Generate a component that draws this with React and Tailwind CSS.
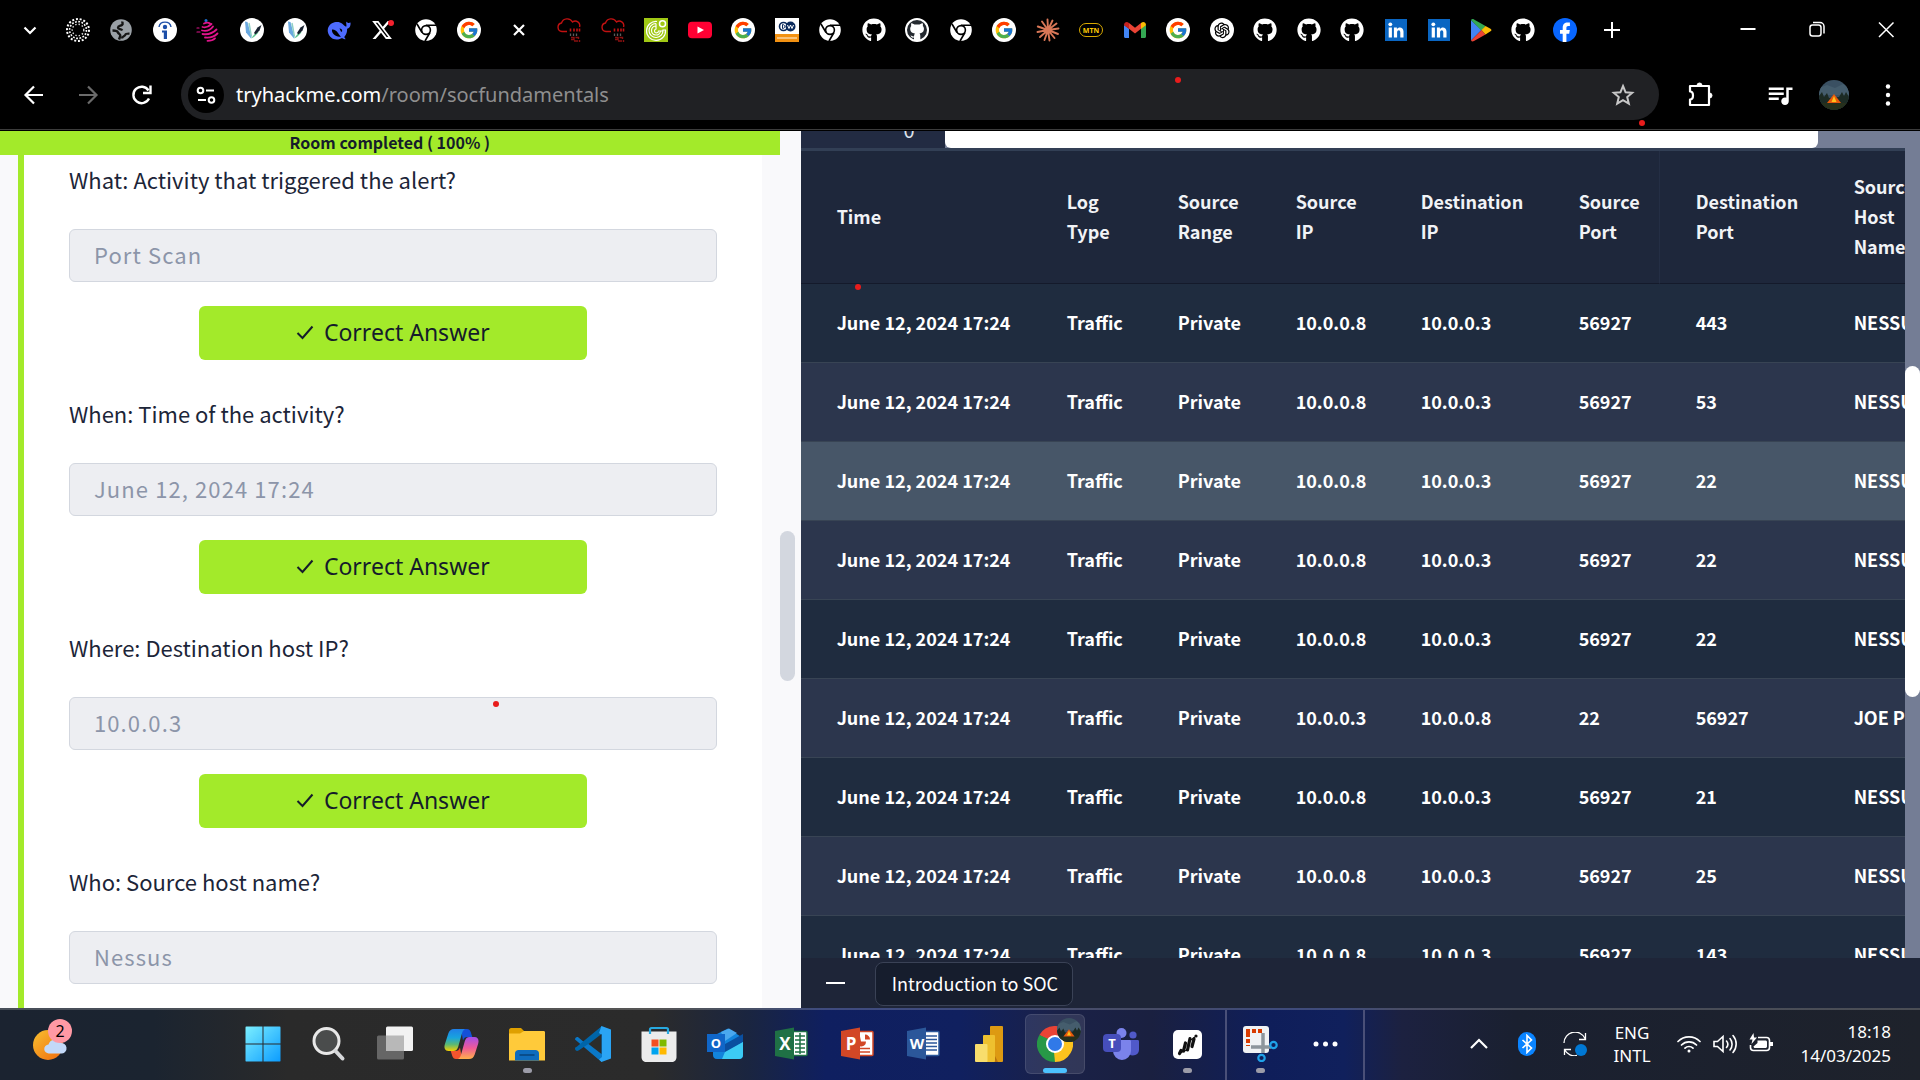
import React from "react";
import { FcGoogle } from "react-icons/fc";
import { FaGithub, FaXTwitter } from "react-icons/fa6";
import { AiOutlineOpenAI } from "react-icons/ai";
import { MdQueueMusic } from "react-icons/md";

const UI = "font-['Noto_Sans',sans-serif]";
const BODY = "font-['Noto_Sans_CJK_SC',sans-serif]";

/* ---------- tab favicons ---------- */

function Svg({ box = 24, className = "size-6", children, ...rest }) {
  return (
    <svg viewBox={`0 0 ${box} ${box}`} className={className} fill="none" aria-hidden="true" {...rest}>
      {children}
    </svg>
  );
}

const DottedRing = () => (
  <Svg>
    <circle cx="12" cy="12" r="11" stroke="#fff" strokeWidth="2" strokeDasharray="2 1.8" />
    <circle cx="12" cy="12" r="8.4" stroke="#fff" strokeWidth="1.6" strokeDasharray="1.8 1.5" />
    <circle cx="12" cy="12" r="5.8" stroke="#ddd" strokeWidth="1.4" strokeDasharray="1.4 2" />
  </Svg>
);

const Globe = () => (
  <Svg>
    <circle cx="12" cy="12" r="10.8" fill="#9aa0a6" />
    <path d="M13.500 3.500c-.5 2 1 2.500-.5 3.500s-4 .8-4 2.800c0 1.700 3.500 1 4.200 2.700M3.500 12.500c3 0 5 .3 5.500 2 .5 1.500 2.500 1 2.300 3.500l-1.300 3.500M13 20.500c0-2.500 3-2 3.500-4 .3-1 2-1 4-.9" stroke="#151515" strokeWidth="2.400" />
  </Svg>
);

const InfoMark = () => (
  <Svg>
    <circle cx="12" cy="12" r="12" fill="#fff" />
    <circle cx="12" cy="9" r="2.200" fill="#1d4fa8" />
    <path d="M9 12.500H14V21H10.800V14.500H9z" fill="#1d4fa8" />
    <path d="M6 9C7 2.500 17 2.500 18 9" stroke="#1d4fa8" strokeWidth="1.400" />
  </Svg>
);

const Cupcake = () => (
  <Svg stroke="#e0148c" strokeLinecap="round">
    <circle cx="10" cy="2.500" r="1.500" fill="#1b6fd0" stroke="none" />
    <path d="M8 5.500c2-1 4-1.500 6 0M6.500 9c3 .8 6.500-.5 9-3M6 12.500c4 1 8.500-.5 11-4M6.500 16c6 1 10-.5 14-4.500M9 19.500c5 .6 9-.6 12.500-4M11.500 22.800c3 0 6-1 7.500-2.500" strokeWidth="1.800" />
    <path d="M1 10h2M1 14h3" strokeWidth="1.200" />
  </Svg>
);

const PenMark = () => (
  <Svg>
    <circle cx="12" cy="12" r="12" fill="#fff" />
    <path d="M5 3.500l2.500.5 4 15-.5 1.500-5-6z" fill="#6aa9e0" />
    <path d="M9 5l2.500 13.500" stroke="#8fd0c4" strokeWidth="1.400" />
    <path d="M11 20.500l5.500-7 2 1-4.500 4.500z" fill="#5cc48c" />
    <path d="M14 15l3.500-5.500L21.500 7l-2 5.500-4 4z" fill="#17202f" />
  </Svg>
);

const Whale = () => (
  <Svg>
    <path d="M23.500 4.500c-1 .4-2 .8-2.800.2-1.200-.9-1.600-2-1.300-1.200-.6 2.200.6 3.800-.2 5.200-1.200-.4-2.700-1.700-4.200-3.200C13 3.600 8.500 3.200 5 5.200 1.500 7.200.2 11 1 14.500c.9 4.200 4.600 7 8.500 7 2.600 0 4-.6 5.600-1.500 1 .9 2.500 1.500 3.600 1-.9-.7-1.500-1.600-1.300-2.200 2-2.200 2.900-5 2.700-8 2.400-.4 3.800-3 3.400-6.300z" fill="#4d6bfe" />
    <path d="M5 11.500c2-.4 4.500 1 6 3.500.9 1.600 2 2.800 3 3.500-2.500.6-5.500-.2-7.300-2.200C5.100 14.500 4.800 13 5 11.500z" fill="#000" />
    <path d="M12.500 10.500c1.400-.2 2.800 1 2.700 2.500-.1.900-.9 1-1.300.4-.3-.7-.7-1.700-1.400-2.900z" fill="#000" />
  </Svg>
);

const XMark = () => (
  <span className="relative flex size-6 items-center justify-center">
    <FaXTwitter className="size-[22px] text-white" />
    <span className="absolute right-0 top-0.5 size-1.5 rounded-full bg-[#f4212e]" />
  </span>
);

const ChromeMono = () => (
  <Svg>
    <circle cx="12" cy="12" r="10.800" fill="#fff" />
    <circle cx="12" cy="12" r="5.200" fill="#000" />
    <circle cx="12" cy="12" r="3.600" fill="#fff" />
    <path d="M12 7.300h10M8 14.500L3 6M16 14.500l-5 8.500" stroke="#000" strokeWidth="1.600" />
  </Svg>
);

const Google = () => (
  <span className="flex size-6 items-center justify-center rounded-full bg-white">
    <FcGoogle className="size-5" />
  </span>
);

const RedCloud = () => (
  <Svg>
    <path d="M10 13.500H5A4.300 4.300 0 0 1 4.500 5 6 6 0 0 1 15.500 4a4.500 4.500 0 0 1 7 5" stroke="#c11111" strokeWidth="1.400" />
    <path d="M13.500 10.500v3M17 10.500v3M20 10.500v3M22.500 10.500v3" stroke="#c11111" strokeWidth="1.600" />
    <path d="M13.500 15.500v2.500M16.500 15.500v2.500M19.500 15.500v2.500" stroke="#5c5c5c" strokeWidth="1.300" />
    <path d="M14 19.500h3v2h-3M18.500 19.500h3v1.500M17 23h4M22.500 22v2" stroke="#8a1010" strokeWidth="1.400" />
  </Svg>
);

const GreenDisc = () => (
  <Svg>
    <rect width="24" height="24" fill="#a0c814" />
    <g stroke="#fff">
      <circle cx="18.500" cy="5.800" r="3" strokeWidth="1.500" />
      <path d="M13 3.500A9.500 9.500 0 1 0 21.500 12H19A7 7 0 1 1 12 5.500" strokeWidth="1.200" />
      <path d="M12 5.500v2.500A4.500 4.500 0 1 0 16.500 13H19M12 8v3a2 2 0 1 0 2.500 2H16" strokeWidth="1.200" />
    </g>
  </Svg>
);

const YouTube = () => (
  <Svg>
    <rect y="3.800" width="24" height="16.500" rx="4" fill="#ff0033" />
    <path d="M9.500 8.500v7l6.500-3.500z" fill="#fff" />
  </Svg>
);

const Dw = () => (
  <span className="flex size-6 flex-col overflow-hidden bg-white">
    <svg viewBox="0 0 24 16" className="h-4 w-6" fill="none" aria-hidden="true">
      <circle cx="8.500" cy="8.500" r="4" stroke="#0b2a5c" strokeWidth="1.600" />
      <path d="M7.500 6.500v4c3 0 3-4 0-4z" stroke="#0b2a5c" />
      <circle cx="15.500" cy="8.500" r="5" fill="#0b2a5c" />
      <path d="M12.500 7l1.500 3.500L15.500 7l1.500 3.500L18.500 7" stroke="#fff" />
    </svg>
    <span className="h-2 bg-[#f29112] px-0.5 pt-[3px]">
      <span className="block h-0.5 bg-[#f8c27c]" />
    </span>
  </span>
);

const Github = () => <FaGithub className="size-6 text-white" />;

const GithubDark = () => (
  <span className="flex size-6 items-center justify-center rounded-full border-2 border-white bg-[#24292f]">
    <svg viewBox="0 0 20 20" className="size-5" aria-hidden="true">
      <path d="M4.500 3l3 1.500h5L15.500 3c.7 1.300.5 2.300.3 3 1 1 1.300 2.200 1.100 3.500-.3 2.500-2 3.700-4.400 4 .7.700.8 1.500.8 2.500v4H7v-2.500c-2 .5-3-.5-3.500-2 1.500-.2 2 1.500 3.500.8.100-1.200.3-2 .9-2.800-3-.4-4.500-1.700-4.700-4.300-.1-1.300.3-2.300 1-3.200-.2-.8-.2-1.800.3-3z" fill="#fff" />
    </svg>
  </span>
);

const Burst = () => (
  <Svg stroke="#d97757" strokeWidth="1.900" strokeLinecap="round">
    <path d="M12 12L11.500 1.500M12 12l4.500-9.500M12 12l8.500-6.500M12 12l10.500-1.500M12 12l10 4M12 12l6.500 8M12 12l1.500 10.500M12 12L8.500 22M12 12l-8 7M12 12L1.500 14M12 12L1.800 8.500M12 12L6 3.500" />
  </Svg>
);

const Mtn = () => (
  <span className="flex h-3.5 w-6 items-center justify-center rounded-full border border-[#d9a900] font-['Open_Sans',sans-serif] text-[7px] font-bold leading-none text-[#ffcb05]">
    MTN
  </span>
);

const Gmail = () => (
  <Svg>
    <path d="M1 7v11.500c0 .9.600 1.500 1.500 1.500H6V10.500z" fill="#4285f4" />
    <path d="M23 7v11.500c0 .9-.6 1.500-1.500 1.500H18V10.500z" fill="#34a853" />
    <path d="M18 5l-6 4.800L6 5v5.800l6 4.600 6-4.600z" fill="#ea4335" />
    <path d="M1 7c0-2.500 2.700-3.800 4.600-2.300L6 5v6L1 7.200z" fill="#c5221f" />
    <path d="M23 7c0-2.500-2.700-3.800-4.600-2.300L18 5v6l5-3.800z" fill="#fbbc04" />
  </Svg>
);

const OpenAi = () => (
  <span className="flex size-6 items-center justify-center rounded-full bg-white">
    <AiOutlineOpenAI className="size-5 text-black" />
  </span>
);

const LinkedIn = () => (
  <Svg>
    <rect x="1" y="1" width="22" height="22" fill="#0a66c2" />
    <circle cx="6.300" cy="6.300" r="1.900" fill="#fff" />
    <path d="M4.700 9.600h3.200v9.900H4.700zM9.900 9.600h3v1.400c1.500-2.500 6.600-2.400 6.600 2.600v5.900h-3.200v-5c0-3-3.200-2.700-3.200.1v4.900H9.900z" fill="#fff" />
  </Svg>
);

const Play = () => (
  <Svg>
    <path d="M2 2v20.500L12.500 12z" fill="#4285f4" />
    <path d="M2 2c.7-1.300 2-1.200 3-.6l11.500 6.600-4 4.500z" fill="#34a853" />
    <path d="M2 22.500c.7 1.200 2 1.100 3 .5l11.500-6.500-4-4.500z" fill="#ea4335" />
    <path d="M16.500 8l5 2.700c1.300.8 1.300 1.900 0 2.600l-5 3.200-4-4.500z" fill="#fbbc04" />
  </Svg>
);

const Facebook = () => (
  <Svg>
    <circle cx="12" cy="12" r="12" fill="#0866ff" />
    <path d="M9.700 24v-8.300H7v-3.700h2.700V9.800c0-3.800 1.900-5.400 5-5.400.9 0 1.600.1 2.200.2V8h-1.600c-1.500 0-1.900.7-1.900 2.100V12h3.400l-.6 3.700h-2.800V24z" fill="#fff" />
  </Svg>
);

const TABS_LEFT = [
  ["Dotted", DottedRing], ["Globe", Globe], ["Info", InfoMark], ["Cupcake", Cupcake], ["Pen", PenMark],
  ["Pen", PenMark], ["DeepSeek", Whale], ["X", XMark], ["Chrome", ChromeMono], ["Google", Google],
];
const TABS_MIDDLE = [
  ["TryHackMe", RedCloud], ["TryHackMe", RedCloud], ["Goethe", GreenDisc], ["YouTube", YouTube], ["Google", Google],
  ["DW", Dw], ["Chrome", ChromeMono], ["GitHub", Github], ["GitHub", GithubDark], ["Chrome", ChromeMono],
  ["Google", Google], ["Claude", Burst], ["MTN", Mtn], ["Gmail", Gmail], ["Google", Google], ["ChatGPT", OpenAi],
  ["GitHub", Github], ["GitHub", Github], ["GitHub", Github], ["LinkedIn", LinkedIn], ["LinkedIn", LinkedIn],
];
const TABS_RIGHT = [["Google Play", Play], ["GitHub", Github], ["Facebook", Facebook]];

function TabGroup({ tabs, className }) {
  return (
    <div className={`flex items-center justify-between ${className}`}>
      {tabs.map(([name, Icon], i) => (
        <button key={i} aria-label={name} className="flex size-6 items-center justify-center">
          <Icon />
        </button>
      ))}
    </div>
  );
}

function TabStrip() {
  return (
    <div className="flex h-[60px] items-center pl-[18px] text-white">
      <button aria-label="Search tabs" className="mr-6">
        <Svg stroke="currentColor" strokeWidth="2.200"><path d="M6.500 9.500l5.500 5.500 5.500-5.500" /></Svg>
      </button>
      <TabGroup tabs={TABS_LEFT} className="w-[415px]" />
      <button aria-label="Close tab" className="mx-[26px]">
        <Svg stroke="currentColor" strokeWidth="2.200"><path d="M7 7l10 10M17 7L7 17" /></Svg>
      </button>
      <TabGroup tabs={TABS_MIDDLE} className="w-[894px]" />
      <TabGroup tabs={TABS_RIGHT} className="ml-[18px] w-[108px]" />
      <button aria-label="New tab" className="ml-[23px]">
        <Svg stroke="currentColor" strokeWidth="2"><path d="M12 4v16M4 12h16" /></Svg>
      </button>
      <div className="ml-auto flex h-full items-center">
        <button aria-label="Minimize" className="flex w-[69px] justify-center">
          <Svg stroke="currentColor" strokeWidth="2"><path d="M4.500 11h15" /></Svg>
        </button>
        <button aria-label="Restore" className="flex w-[69px] justify-center">
          <Svg stroke="currentColor" strokeWidth="1.500">
            <rect x="5" y="7" width="11" height="11" rx="2.500" />
            <path d="M8 4.500h7a4 4 0 0 1 4 4v7" />
          </Svg>
        </button>
        <button aria-label="Close" className="flex w-[69px] justify-center">
          <Svg stroke="currentColor" strokeWidth="1.500"><path d="M5 4.500l14.500 14.500M19.500 4.500L5 19" /></Svg>
        </button>
      </div>
    </div>
  );
}

function Camp({ className }) {
  return (
    <svg viewBox="0 0 30 30" className={`rounded-full ${className}`} aria-hidden="true">
      <rect width="30" height="30" fill="#3a5062" />
      <path d="M0 8l8-3 8 3 8-4 6 3v8H0z" fill="#455d6d" />
      <path d="M0 16l3-4 2 5 3-4 2 5 10-1 3-5 2 4 2-4 3 5v13H0z" fill="#1c2b24" />
      <path d="M0 23h30v7H0z" fill="#26301c" />
      <path d="M8 23l7-9 7 9z" fill="#e8590c" />
      <path d="M12.500 22l2.500-6 2.500 6z" fill="#ffc21a" />
    </svg>
  );
}

function Toolbar() {
  return (
    <div className="flex h-[70px] items-center border-b border-[#3c3c3c] px-5 text-white">
      <div className="flex items-center gap-[26px]">
        <button aria-label="Back">
          <Svg box={28} className="size-7" stroke="currentColor" strokeWidth="2.200"><path d="M23 14H6M14 5.500L5.500 14l8.500 8.500" /></Svg>
        </button>
        <button aria-label="Forward" className="text-[#6b6b6b]">
          <Svg box={28} className="size-7" stroke="currentColor" strokeWidth="2.200"><path d="M5 14h17M14 5.500l8.500 8.500-8.500 8.500" /></Svg>
        </button>
        <button aria-label="Reload">
          <Svg box={28} className="size-7" stroke="currentColor" strokeWidth="2.400">
            <path d="M21 17.500A8.200 8.200 0 1 1 20.500 9.500" />
            <path d="M22.500 4.500v7.500h-7.500" />
          </Svg>
        </button>
      </div>
      <div className="ml-[25px] flex h-[51px] flex-1 items-center rounded-full bg-[#202124] pl-[7px] pr-6">
        <button aria-label="Site information" className="flex size-9 items-center justify-center rounded-full bg-black">
          <Svg stroke="currentColor" strokeWidth="2">
            <circle cx="6.500" cy="7.500" r="2.800" /><path d="M12 7.500h8M4 17h8" /><circle cx="17.500" cy="17" r="2.800" />
          </Svg>
        </button>
        <div className={`ml-3 flex-1 text-[20px] leading-7 ${UI}`}>
          tryhackme.com<span className="text-[#8f8f8f]">/room/socfundamentals</span>
        </div>
        <button aria-label="Bookmark" className="text-[#c7c7c7]">
          <Svg stroke="currentColor" strokeWidth="2">
            <path d="M12 3l2.600 6.300 6.600.5-5 4.300 1.600 6.500L12 17.100l-5.800 3.500 1.600-6.500-5-4.300 6.600-.5z" />
          </Svg>
        </button>
      </div>
      <div className="ml-[27px] flex items-center">
        <button aria-label="Extensions">
          <Svg box={28} className="size-7" stroke="currentColor" strokeWidth="2.200">
            <path d="M4 5h19v19H4v-5.500c4 0 4-8 0-8z" strokeLinejoin="round" />
            <path d="M11 4.500a2.500 2.500 0 0 1 5 0zM23.500 12a2.500 2.500 0 0 1 0 5z" fill="currentColor" strokeWidth="1" />
          </Svg>
        </button>
        <button aria-label="Media controls" className="ml-[51px]">
          <MdQueueMusic className="size-[30px]" />
        </button>
        <button aria-label="Profile" className="ml-6">
          <Camp className="size-[30px]" />
        </button>
        <button aria-label="Menu" className="ml-[27px]">
          <Svg fill="currentColor"><circle cx="12" cy="3.500" r="2.200" /><circle cx="12" cy="12" r="2.200" /><circle cx="12" cy="20.500" r="2.200" /></Svg>
        </button>
      </div>
    </div>
  );
}

/* ---------- left: room questions ---------- */

const QUESTIONS = [
  { id: "what", label: "What: Activity that triggered the alert?", answer: "Port Scan", checked: true },
  { id: "when", label: "When: Time of the activity?", answer: "June 12, 2024 17:24", checked: true },
  { id: "where", label: "Where: Destination host IP?", answer: "10.0.0.3", checked: true },
  { id: "who", label: "Who: Source host name?", answer: "Nessus", checked: false },
];

function Question({ id, label, answer, checked }) {
  return (
    <div className="mb-[37px] flex flex-col">
      <label htmlFor={id} className="mb-[34px] text-[22px] leading-8 text-[#1c2538]">{label}</label>
      <input
        id={id}
        readOnly
        value={answer}
        className="mb-6 h-[53px] w-full rounded-md border border-[#d3d7df] bg-[#edeef2] px-6 pb-1 text-[22px] tracking-wider text-[#8c95a9] outline-none"
      />
      {checked && (
        <button className={`flex h-[54px] w-3/5 items-center justify-center gap-2.5 self-center rounded-md bg-[#a3ea2a] pb-0.5 text-[23px] text-[#151c2b] ${UI}`}>
          <Svg box={18} className="size-[18px]" stroke="currentColor" strokeWidth="2"><path d="M1.500 10l5 5L16.500 3.500" /></Svg>
          Correct Answer
        </button>
      )}
    </div>
  );
}

function RoomPanel() {
  return (
    <section className={`flex w-[41.7%] bg-[#f9f9fb] ${BODY}`}>
      <div className="flex min-w-0 flex-1 flex-col">
        <div className="flex h-6 shrink-0 items-center justify-center bg-[#a3ea2a] pb-0.5 text-[16px] font-bold text-[#151c2b]">
          Room completed ( 100% )
        </div>
        <div className="ml-[18px] mr-[18px] min-h-0 flex-1 overflow-hidden border-l-[6px] border-[#a3ea2a] bg-white px-[45px] pt-2">
          {QUESTIONS.map((q) => (
            <Question key={q.id} {...q} />
          ))}
        </div>
      </div>
      <div className="w-[21px] shrink-0 pt-[400px]">
        <div className="h-[150px] w-[15px] rounded-full bg-[#d3d7df]" />
      </div>
    </section>
  );
}

/* ---------- right: log table ---------- */

const HEADERS = ["Time", "Log\nType", "Source\nRange", "Source\nIP", "Destination\nIP", "Source\nPort", "Destination\nPort", "Source\nHost\nName"];
const T = "June 12, 2024 17:24";
const ROWS = [
  ["10.0.0.8", "10.0.0.3", "56927", "443", "NESSUS"],
  ["10.0.0.8", "10.0.0.3", "56927", "53", "NESSUS"],
  ["10.0.0.8", "10.0.0.3", "56927", "22", "NESSUS"],
  ["10.0.0.8", "10.0.0.3", "56927", "22", "NESSUS"],
  ["10.0.0.8", "10.0.0.3", "56927", "22", "NESSUS"],
  ["10.0.0.3", "10.0.0.8", "22", "56927", "JOE PC"],
  ["10.0.0.8", "10.0.0.3", "56927", "21", "NESSUS"],
  ["10.0.0.8", "10.0.0.3", "56927", "25", "NESSUS"],
  ["10.0.0.8", "10.0.0.3", "56927", "143", "NESSUS"],
];

function rowColor(i) {
  if (i === 2) return "bg-[#475668]";
  return i % 2 ? "bg-[#2c364d]" : "bg-[#1f2c3f]";
}

function LogTable() {
  return (
    <table className="w-[1160px] table-fixed border-separate border-spacing-0 text-left text-[18px] font-bold leading-[30px] text-white">
      <colgroup>
        <col className="w-[230px]" />
        <col className="w-[111px]" />
        <col className="w-[118px]" />
        <col className="w-[125px]" />
        <col className="w-[158px]" />
        <col className="w-[117px]" />
        <col className="w-[158px]" />
        <col />
      </colgroup>
      <thead>
        <tr className="h-[133px] bg-[#1e273b]">
          {HEADERS.map((h, i) => (
            <th key={h} className={`whitespace-pre border-b border-b-[#141a2b] p-0 pb-0.5 pl-9 align-middle text-[#f1f3f6] ${i === 5 ? "border-r border-r-[#242e44]" : ""}`}>
              {h}
            </th>
          ))}
        </tr>
      </thead>
      <tbody>
        {ROWS.map((r, i) => (
          <tr key={i} className={`h-[79px] ${rowColor(i)}`}>
            {[T, "Traffic", "Private", ...r].map((c, j) => (
              <td key={j} className="whitespace-nowrap border-b border-[#384454] p-0 pb-0.5 pl-9">{c}</td>
            ))}
          </tr>
        ))}
      </tbody>
    </table>
  );
}

function LogPanel() {
  return (
    <section className={`flex min-w-0 flex-1 flex-col bg-[#1e2538] ${BODY}`}>
      <div className="flex min-h-0 flex-1">
        <div className="flex min-w-0 flex-1 flex-col overflow-hidden">
          <div className="flex h-[17px] shrink-0 items-end overflow-hidden bg-[#747d95]">
            <div className="flex h-full w-36 items-end justify-end bg-[#222b42] pb-2 pr-[30px] text-[20px] leading-5 text-[#dfe3ea]">0</div>
            <div className="mr-[87px] h-full flex-1 rounded-b-md bg-white" />
          </div>
          <div className="h-[3px] shrink-0 bg-[#323f55]" />
          <div className="min-h-0 flex-1 overflow-hidden">
            <LogTable />
          </div>
        </div>
        <div className="w-[15px] shrink-0 bg-[#747d95] pt-[235px]">
          <div className="h-[331px] rounded-full bg-white" />
        </div>
      </div>
      <div className="flex h-[50px] shrink-0 items-center pl-[25px]">
        <button aria-label="Minimise panel" className="flex h-6 w-[19px] items-center">
          <span className="h-0.5 w-full bg-white" />
        </button>
        <button className="ml-[30px] mt-0.5 h-11 rounded-lg border border-[#3a4256] bg-[#161d2d] pb-0.5 pl-4 pr-3.5 text-[18px] text-white">
          Introduction to SOC
        </button>
      </div>
    </section>
  );
}

/* ---------- taskbar ---------- */

const TI = "size-9";

const WinLogo = () => (
  <Svg box={36} className={TI}>
    <defs>
      <linearGradient id="win" x1="0" y1="0" x2="1" y2="1" gradientUnits="objectBoundingBox">
        <stop stopColor="#7df0ff" /><stop offset="1" stopColor="#0a9bff" />
      </linearGradient>
      <mask id="winm"><path d="M.5.500H17.500V17.500H.5zM18.500.500H35.500V17.500H18.500zM.5 18.500H17.500V35.500H.5zM18.500 18.500H35.500V35.500H18.500z" fill="#fff" /></mask>
    </defs>
    <rect width="36" height="36" rx="1.500" fill="url(#win)" mask="url(#winm)" />
  </Svg>
);
const SearchIcon = () => (
  <Svg box={36} className={TI}>
    <circle cx="15.500" cy="15" r="12.500" fill="#4a4c4c" stroke="#e8e8e8" strokeWidth="3" />
    <path d="M24.500 25l7 7.500" stroke="#d6d8da" strokeWidth="4" strokeLinecap="round" />
  </Svg>
);
const TaskView = () => (
  <Svg box={36} className={TI}>
    <rect y="9.500" width="27" height="24" rx="1.500" fill="#666" />
    <rect x="9" y=".5" width="27" height="24.500" rx="1.500" fill="#f2f2f2" />
    <path d="M9 9.500h18V25H9z" fill="#b8b8b8" />
  </Svg>
);
const Copilot = () => (
  <Svg box={36} className={TI}>
    <defs>
      <linearGradient id="cpa" x1="0" y1="0" x2="0" y2="1"><stop stopColor="#1f7fe8" /><stop offset=".4" stopColor="#18a4dd" /><stop offset=".7" stopColor="#5bb974" /><stop offset="1" stopColor="#f6d000" /></linearGradient>
      <linearGradient id="cpb" x1="0" y1="0" x2="0" y2="1"><stop stopColor="#a44fe8" /><stop offset=".5" stopColor="#ef5a97" /><stop offset="1" stopColor="#ffb04a" /></linearGradient>
    </defs>
    <path d="M18 3h6c2 0 3 1 3.700 3l1.600 5h-4.800c-2.500 0-3.500 1-4.500 3.500z" fill="#1450d8" />
    <path d="M19 33h-6c-2 0-3-1-3.700-3l-1.600-5h4.800c2.500 0 3.500-1 4.500-3.500z" fill="#f2542e" />
    <path d="M11 3h11c-2 1-2.700 3-3.500 6l-3.200 11.500c-1 3.300-2.300 4.500-5 4.500H5.500C2 25 .8 22 1.800 18.500l3.500-11C6.400 4.500 8 3 11 3z" fill="url(#cpa)" />
    <path d="M26 33H15c2-1 2.700-3 3.500-6l3.200-11.500c1-3.300 2.300-4.500 5-4.500h4.800c3.500 0 4.700 3 3.700 6.500l-3.500 11C30.600 31.500 29 33 26 33z" fill="url(#cpb)" />
  </Svg>
);
const Explorer = () => (
  <Svg box={36} className={TI}>
    <path d="M0 4.500C0 3 .8 2 2.300 2h9.700l4 4H36v6H0z" fill="#dfa000" />
    <path d="M0 7.500h11l4-2.500h19.500c1 0 1.500.5 1.500 1.500V34.500H0z" fill="#ffca3a" />
    <path d="M6 34.500V27.500c0-2 1.500-3.500 3.500-3.500h17c2 0 3.500 1.500 3.500 3.500v7z" fill="#0f6cbd" />
    <path d="M10.500 29h15" stroke="#0a4a86" strokeWidth="1.800" />
  </Svg>
);
const VsCode = () => (
  <Svg box={36} className={TI}>
    <path d="M27 0L9.500 16.500 3.500 11.500C2 10.500 0 11.500 0 13.500l23 19.500L27 36z" fill="#0a78c8" />
    <path d="M0 22.500c0 2 2 3.200 3.500 2L27 9V0L2 20.500c-1 .6-2 1-2 2z" fill="#0065a9" />
    <path d="M26.500 0L36 3.500v29L26.500 36 24 33.500 27 31V9l-3-2z" fill="#2aa4f4" />
    <path d="M13.500 18L26.500 8v20z" fill="#2b2c2b" />
  </Svg>
);
const Store = () => (
  <Svg box={36} className={TI}>
    <path d="M.5 5.500h35V31c0 3-2 5-5 5h-25c-3 0-5-2-5-5z" fill="#ececec" />
    <path d="M9 8V3.500C9 2.500 9.500 2 10.500 2h15c1 0 1.500.5 1.500 1.500V8" stroke="#27a9e0" strokeWidth="2.200" />
    <path d="M10.500 13.500h7v7h-7z" fill="#f25022" /><path d="M18.500 13.500h7v7h-7z" fill="#7fba00" />
    <path d="M10.500 21.500h7v7h-7z" fill="#00a4ef" /><path d="M18.500 21.500h7v7h-7z" fill="#ffb900" />
  </Svg>
);

function OfficeTile({ letter, className, children }) {
  return (
    <span className="relative block size-9">
      {children}
      <span className={`absolute flex items-center justify-center font-['Open_Sans',sans-serif] font-bold leading-none text-white ${className}`}>{letter}</span>
    </span>
  );
}
const Outlook = () => (
  <OfficeTile letter="O" className="left-0 top-2 size-[18px] bg-[#1066c8] text-[13px]">
    <Svg box={36} className={TI}>
      <path d="M6 10L21 2.500 36 12v17c0 2.500-1.500 4-4 4H10c-3 0-4-2-4-4z" fill="#1284dc" />
      <path d="M14 6l8-3.500L30 7 18 15z" fill="#4aa8ee" />
      <path d="M18 18L36 8v8L18 27z" fill="#0a4fa0" />
      <path d="M15 33l3-7 18-10v13c0 2.500-1.500 4-4 4z" fill="#3ccbf4" />
    </Svg>
  </OfficeTile>
);
const Book = ({ dark, children }) => (
  <Svg box={36} className={TI}>
    <rect x="17" y="5.500" width="17" height="24" rx="1" fill="#fff" stroke={dark} strokeWidth="1.500" />
    {children}
    <path d="M2 5L21 1.500v32L2 30z" fill={dark} />
  </Svg>
);
const Excel = () => (
  <OfficeTile letter="X" className="left-1 top-2 h-[18px] w-4 text-[17px]">
    <Book dark="#1f7145"><path d="M22 10h10M22 14h10M22 18h10M22 22h10M22 26h10M27 7v21" stroke="#1f7145" strokeWidth="1.500" /></Book>
  </OfficeTile>
);
const PowerPoint = () => (
  <OfficeTile letter="P" className="left-1 top-2 h-[18px] w-4 text-[17px]">
    <Book dark="#d24726"><path d="M21 10.500a5 5 0 1 0 6 5h-5z" fill="#d24726" /><path d="M26 8.500a5 5 0 0 1 5 5h-5z" fill="#d24726" /><path d="M21 22.500h10M21 26h10" stroke="#d24726" strokeWidth="1.500" /></Book>
  </OfficeTile>
);
const Word = () => (
  <OfficeTile letter="W" className="left-1 top-2 h-[18px] w-4 text-[15px]">
    <Book dark="#2b579a"><path d="M21 10h11M21 13.500h11M21 17h11M21 20.500h11M21 24h11" stroke="#2b579a" strokeWidth="1.500" /></Book>
  </OfficeTile>
);
const PowerBi = () => (
  <Svg box={36} className={TI}>
    <rect x="19" width="13" height="36" rx="1" fill="#dd9a12" />
    <path d="M19 36V20l8 16z" fill="#b8730f" />
    <rect x="12" y="9" width="12" height="27" rx="1" fill="#eec02f" />
    <rect x="4" y="18" width="12.500" height="18" rx="1" fill="#f8dd6c" />
  </Svg>
);
const ChromeColor = () => (
  <span className="relative block size-9">
    <Svg box={36} className={TI}>
      <path d="M18 18L2.400 9A18 18 0 0 1 33.600 9z" fill="#e94335" />
      <path d="M18 18L33.600 9A18 18 0 0 1 18 36z" fill="#fcc31e" />
      <path d="M18 18L18 36A18 18 0 0 1 2.400 9z" fill="#279847" />
      <path d="M18 9h15.600L26 14z" fill="#e94335" />
      <path d="M25.800 22.500L18 36l-1-10z" fill="#fcc31e" />
      <path d="M10.200 22.500L2.400 9l9 4z" fill="#279847" />
      <circle cx="18" cy="18" r="9" fill="#fff" /><circle cx="18" cy="18" r="7" fill="#3079e8" />
    </Svg>
    <Camp className="absolute -right-2 -top-2 size-6" />
  </span>
);
const Teams = () => (
  <OfficeTile letter="T" className="left-0 top-2 size-[18px] rounded-sm bg-[#464ebb] text-[13px]">
    <Svg box={36} className={TI}>
      <circle cx="18.500" cy="7" r="5" fill="#7b83eb" /><circle cx="30" cy="9" r="3.600" fill="#5059c9" />
      <path d="M26 14h8.500c1 0 1.500.5 1.500 1.500V24a6 6 0 0 1-10 4z" fill="#5059c9" />
      <path d="M10 14h16.500c1 0 1.500.5 1.500 1.500V25a8.500 8.500 0 0 1-18 0z" fill="#7b83eb" />
    </Svg>
  </OfficeTile>
);
const Bars = () => (
  <Svg box={36} className={TI}>
    <rect x="4" y="4" width="29" height="29" rx="5" fill="#fff" />
    <path d="M10.500 27.500l1.500-3M14.500 25l2-8M18.500 24l2.500-11.500M23 20.500l2-7.500" stroke="#111" strokeWidth="3.200" strokeLinecap="round" />
    <path d="M10 28l5-3 4-1M22 14l4-3" stroke="#111" strokeWidth="1.200" />
    <circle cx="27" cy="10" r="1.600" fill="#111" />
  </Svg>
);
const Snip = () => (
  <Svg box={36} className={TI}>
    <rect x="1" y="0" width="26" height="27" rx="3" fill="#f0f2f4" />
    <path d="M4 5h16M6 7v13" stroke="#d83b01" strokeWidth="4" strokeDasharray="4 2" />
    <path d="M21 7v20M9 21h20" stroke="#8d959c" strokeWidth="3.500" />
    <circle cx="31.500" cy="19" r="3.200" stroke="#1fa2e8" strokeWidth="2.200" /><circle cx="19.500" cy="32" r="3.200" stroke="#1fa2e8" strokeWidth="2.200" />
  </Svg>
);
const More = () => (
  <Svg box={36} className={TI}><g fill="#fff"><circle cx="8" cy="18" r="2.500" /><circle cx="17.500" cy="18" r="2.500" /><circle cx="27" cy="18" r="2.500" /></g></Svg>
);

const APPS = [
  ["Start", WinLogo], ["Search", SearchIcon], ["Task view", TaskView], ["Copilot", Copilot], ["File Explorer", Explorer, "open"],
  ["VS Code", VsCode], ["Microsoft Store", Store], ["Outlook", Outlook], ["Excel", Excel], ["PowerPoint", PowerPoint],
  ["Word", Word], ["Power BI", PowerBi], ["Chrome", ChromeColor, "active"], ["Teams", Teams], ["Charts", Bars, "open"],
];

function AppButton({ name, Icon, state }) {
  return (
    <button aria-label={name} className="flex h-full w-[66px] items-center justify-center pb-0.5">
      <span className={`relative flex size-[60px] items-center justify-center rounded-md ${state === "active" ? "border border-white/10 bg-white/10" : ""}`}>
        <Icon />
        {state === "open" && <span className="absolute bottom-px h-[5px] w-[9px] rounded-full bg-[#9c9ca8]" />}
        {state === "active" && <span className="absolute bottom-0 h-[5px] w-6 rounded-full bg-[#4cc2ff]" />}
      </span>
    </button>
  );
}

function Weather() {
  return (
    <button aria-label="Widgets" className="relative ml-8 size-9">
      <Svg box={36} className={TI}>
        <defs><linearGradient id="sun" x1="0" y1="0" x2="1" y2="1"><stop stopColor="#f8c030" /><stop offset="1" stopColor="#f06a0c" /></linearGradient></defs>
        <circle cx="16" cy="18" r="15" fill="url(#sun)" />
        <path d="M17 26.500a4.500 4.500 0 0 1-.5-9 6.500 6.500 0 0 1 12-1.500 5.300 5.300 0 0 1 1.500 10.500z" fill="#c3d9f8" />
      </Svg>
      <span className={`absolute -right-1 -top-2 flex size-6 items-center justify-center rounded-full bg-[#ff99a4] text-[16px] leading-none text-black ${UI}`}>2</span>
    </button>
  );
}

function Tray() {
  return (
    <div className={`ml-auto flex items-center pb-0.5 pr-[29px] text-[17px] leading-6 text-white ${UI}`}>
      <button aria-label="Hidden icons"><Svg stroke="currentColor" strokeWidth="2.200"><path d="M4 16l8-8 8 8" /></Svg></button>
      <button aria-label="Bluetooth" className="ml-[27px] flex h-6 w-[18px] items-center justify-center rounded-full bg-[#0a84ff]">
        <svg viewBox="0 0 12 20" className="h-5 w-3" fill="none" stroke="#fff" strokeWidth="1.600" aria-hidden="true"><path d="M1.500 6l9 8L6 18.500v-17L10.500 6l-9 8" /></svg>
      </button>
      <button aria-label="Sync" className="ml-[27px]">
        <Svg stroke="currentColor" strokeWidth="1.300">
          <path d="M1 11A11 11 0 0 1 22 6.500M22.500 1v6.500H16M1.500 23v-5.500H8M1.800 18A11 11 0 0 0 14 23.500" />
          <circle cx="18" cy="18" r="6" fill="#0078d4" stroke="none" />
        </Svg>
      </button>
      <button className="ml-[27px] text-center leading-[23px]">ENG<br />INTL</button>
      <button aria-label="Network and sound" className="ml-[26px] flex items-center gap-3">
        <Svg stroke="currentColor" strokeWidth="1.700" strokeLinecap="round">
          <path d="M1 9.500a15.500 15.500 0 0 1 22 0M4.500 13a10.500 10.500 0 0 1 15 0M8 16.200a5.600 5.600 0 0 1 8 0" />
          <circle cx="12" cy="19" r="1.500" fill="currentColor" stroke="none" />
        </Svg>
        <Svg stroke="currentColor" strokeWidth="1.600" strokeLinecap="round">
          <path d="M1 9.500v5h3.500l5.500 5V4.500l-5.500 5zM13.500 9a5 5 0 0 1 0 6.500M17 6.500a9 9 0 0 1 0 11.500M20 3.500a13 13 0 0 1 0 17" />
        </Svg>
        <Svg stroke="currentColor" strokeWidth="1.600">
          <path d="M9 5.500h8.500a3 3 0 0 1 3 3v7a3 3 0 0 1-3 3h-13a3 3 0 0 1-3-3V13" />
          <path d="M22.500 10v4" strokeWidth="3" />
          <path d="M8.500 8.500h8c.8 0 1.500.5 1.500 1.500v4.500c0 .8-.7 1.500-1.500 1.500H6c-.8 0-1.500-.6-1.500-1.500l4-3.500z" fill="currentColor" stroke="none" />
          <path d="M4.500 1L.5 7.500H3.500L2.500 12 8 5.500H5z" fill="currentColor" stroke="none" />
        </Svg>
      </button>
      <button className="ml-7 text-right">18:18<br />14/03/2025</button>
    </div>
  );
}

function Taskbar() {
  return (
    <footer className="flex h-[72px] shrink-0 items-center overflow-hidden border-t-2 border-white/20 bg-[linear-gradient(90deg,#1b2330_0%,#1b2430_8%,#2a2a2a_15%,#2b2b2b_34%,#1a2540_39%,#0f1f60_43%,#10205f_50%,#1a2148_55%,#1a2040_60%,#0f1e5a_66%,#10205c_70%,#1c2140_73%,#1a2030_79%,#1e222b_100%)]">
      <Weather />
      <nav className="ml-[162px] flex h-full items-center">
        {APPS.map(([name, Icon, state]) => (
          <AppButton key={name} name={name} Icon={Icon} state={state} />
        ))}
      </nav>
      <div className="ml-[5px] flex h-full items-center border-x-2 border-[#4a5078]">
        <AppButton name="Snipping Tool" Icon={Snip} state="open" />
        <AppButton name="More" Icon={More} />
        <span className="w-1" />
      </div>
      <Tray />
    </footer>
  );
}

const SPECKS = ["left-[1175px] top-[77px]", "left-[1639px] top-[120px]", "left-[855px] top-[284px]", "left-[493px] top-[701px]"];

export default function App() {
  return (
    <div className="relative flex h-screen flex-col overflow-hidden bg-black">
      <header className="shrink-0 pb-px">
        <TabStrip />
        <Toolbar />
      </header>
      <main className="flex min-h-0 flex-1">
        <RoomPanel />
        <LogPanel />
      </main>
      <Taskbar />
      {SPECKS.map((s) => (
        <span key={s} className={`pointer-events-none absolute size-1.5 rounded-full bg-[#e81c1c] ${s}`} />
      ))}
    </div>
  );
}
